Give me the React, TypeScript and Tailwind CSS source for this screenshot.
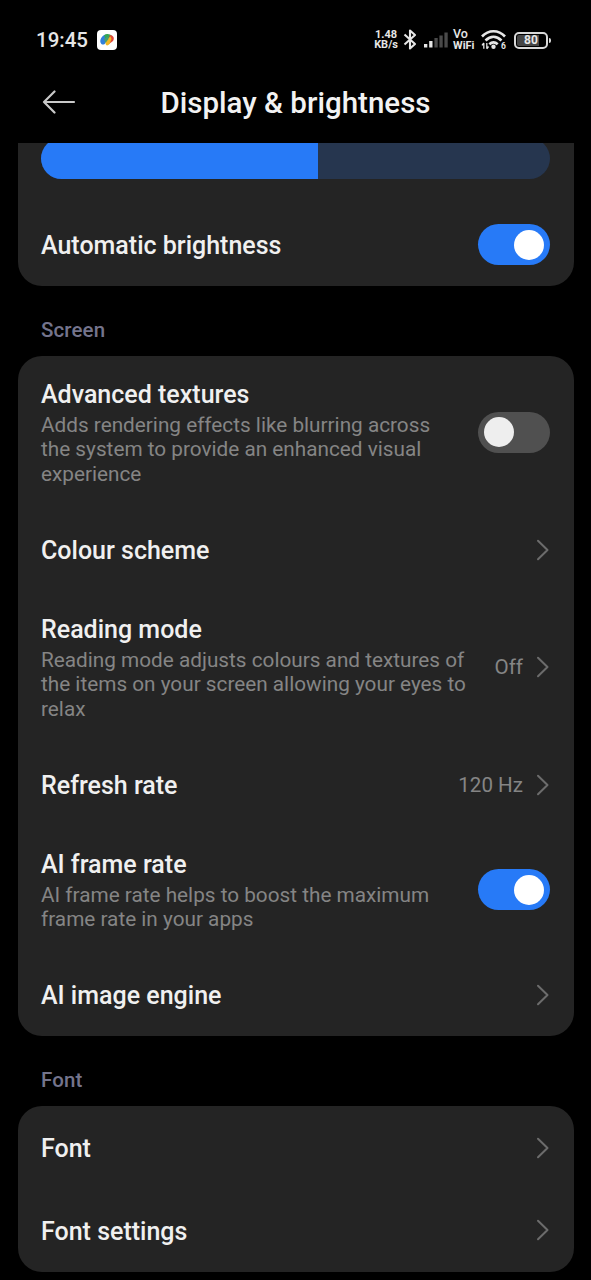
import type { ReactNode } from 'react'

function Toggle({ on }: { on?: boolean }) {
    return (
        <div className={`flex h-[41px] w-[72px] shrink-0 items-center rounded-full px-[6px] ${on ? 'justify-end bg-[#277af7]' : 'justify-start bg-[#505050]'}`}>
            <div className={`size-[30px] rounded-full ${on ? 'bg-white' : 'bg-[#eeeeee]'}`} />
        </div>
    )
}

function Chevron() {
    return (
        <svg width="14" height="22" viewBox="0 0 14 22" fill="none" className="shrink-0">
            <path d="M2 1.7 L11.5 11 L2 20.3" stroke="#6c6c6c" strokeWidth="2" strokeLinecap="round" strokeLinejoin="round" />
        </svg>
    )
}

type RowProps = {
    title: string
    lines?: string[]
    height: string
    value?: string
    children?: ReactNode
}

function Row({ title, lines, height, value, children }: RowProps) {
    return (
        <div className={`flex items-center justify-between ${height}`}>
            <div className={lines ? 'pt-[2px]' : 'pt-[3px]'}>
                <h2 className="text-[25px] leading-[30px] font-medium whitespace-nowrap text-[#f0f0f0]">{title}</h2>
                {lines && (
                    <p className="mt-[3px] text-[20.75px] leading-[24.5px] whitespace-nowrap text-[#858585]">
                        {lines.map((line) => (
                            <span key={line} className="block">{line}</span>
                        ))}
                    </p>
                )}
            </div>
            <div className="flex items-center gap-[13px]">
                {value && <span className="text-[20.6px] leading-[24px] text-[#858585]">{value}</span>}
                {children ?? <Chevron />}
            </div>
        </div>
    )
}

function StatusBar() {
    return (
        <div className="flex h-[80px] items-center justify-between pr-[40px] pl-[36px] text-[#e6e6e6]">
            <div className="flex items-center gap-[9px]">
                <span className="text-[20.5px] leading-[24px] font-medium">19:45</span>
                <svg width="20" height="20" viewBox="0 0 20 20">
                    <rect width="20" height="20" rx="4" fill="#fff" />
                    <path d="M3.3 12 C3 8 6 5 9 4.5 L8.5 13 C7 15.5 4 15 3.3 12Z" fill="#3080dc" />
                    <path d="M7 5.5 C10 3 13 4 15 6 L9.5 11Z" fill="#35a853" />
                    <path d="M12.5 5 C16.5 5 17.8 8.5 16 11 L12 14Z" fill="#e0483a" />
                    <path d="M9 10 L13.5 6.5 L14.5 9 L12.5 14 C11 16 8.5 16 8.5 13Z" fill="#f2b824" />
                    <path d="M7 9 L11.5 6 L11.5 9 L8.5 13Z" fill="#459f72" />
                </svg>
            </div>
            <div className="flex items-center">
                <div className="flex w-[24px] flex-col items-center text-[11px] leading-[10.5px] font-bold whitespace-nowrap">
                    <span>1.48</span>
                    <span>KB/s</span>
                </div>
                <svg width="14" height="22" viewBox="0 0 14 22" fill="none" stroke="#e6e6e6" strokeWidth="2.1" strokeLinejoin="round" className="ml-[5px]">
                    <path d="M1.5 5.5 L12 15 L7 19.5 V1.5 L12 6 L1.5 15.5" />
                </svg>
                <svg width="24" height="17" viewBox="0 0 24 17" className="ml-[7px]">
                    <rect x="0" y="12" width="3.3" height="3.5" fill="#e6e6e6" />
                    <rect x="5.2" y="9" width="3.3" height="6.5" fill="#e6e6e6" />
                    <rect x="10.4" y="6" width="3.3" height="9.5" fill="#4a4a4a" />
                    <rect x="15.4" y="3.5" width="3.3" height="12" fill="#4a4a4a" />
                    <rect x="20.4" y="0.5" width="3.3" height="15" fill="#4a4a4a" />
                </svg>
                <div className="ml-[5px] flex w-[23px] flex-col font-medium whitespace-nowrap">
                    <span className="text-[12.5px] leading-[11px]">Vo</span>
                    <span className="text-[11px] leading-[14px] font-bold">WiFi</span>
                </div>
                <svg width="26" height="22" viewBox="0 0 26 22" fill="none" className="ml-[5px]">
                    <g stroke="#e6e6e6" strokeWidth="2.6">
                        <path d="M1 7.5 C7.5 0.5 17.5 0.5 24 7.5" />
                        <path d="M4.5 11.5 C9.5 6.5 15.5 6.5 20.5 11.5" />
                        <path d="M8.3 15.3 C11 12.7 14 12.7 16.7 15.3" />
                    </g>
                    <circle cx="12.5" cy="17.8" r="2.2" fill="#e6e6e6" />
                    <path d="M2.8 19.8 V14 M1 16.3 L2.8 14 M5.8 14 V19.8 M7.5 17.5 L5.8 19.8" stroke="#e6e6e6" strokeWidth="1.3" />
                    <text x="20" y="20" fill="#e6e6e6" fontSize="8.5" fontWeight="700">6</text>
                </svg>
                <div className="ml-[7px] flex h-[17px] w-[34px] items-center justify-center rounded-[5px] border-2 border-[#d8d8d8] p-[1px]">
                    <div className="flex h-full w-full items-center justify-center rounded-[2px] bg-linear-to-r from-[#454545] from-80% to-black to-80% text-[12px] leading-none font-bold">80</div>
                </div>
                <div className="ml-[1px] h-[5px] w-[2px] rounded-r bg-[#d8d8d8]" />
            </div>
        </div>
    )
}

export default function App() {
    return (
        <div className="h-[1280px] w-[591px] overflow-hidden bg-black font-[Roboto,sans-serif]">
            <StatusBar />
            <header className="flex h-[63px] items-start pl-[42px]">
                <svg width="34" height="24" viewBox="0 0 34 24" fill="none" stroke="#c9c9c9" strokeWidth="2.2" strokeLinecap="round" strokeLinejoin="round" className="mt-[10px]">
                    <path d="M12.5 1.5 L2 12 L12.5 22.5 M2 12 H32" />
                </svg>
                <h1 className="ml-[84.5px] text-[29.5px] leading-[46px] font-medium tracking-[0.01px] whitespace-nowrap text-[#f2f2f2]">Display &amp; brightness</h1>
            </header>

            <main className="pl-[17.5px]">
                <section className="h-[143px] w-[556px] overflow-hidden rounded-b-[24px] bg-[#242424] px-[23.5px]">
                    <div className="-mt-[5px] flex h-[41px] w-[509px] overflow-hidden rounded-full bg-[#26364f]">
                        <div className="w-[277px] bg-[#277af7]" />
                    </div>
                    <div className="mt-[24px]">
                        <Row title="Automatic brightness" height="h-[83px]"><Toggle on /></Row>
                    </div>
                </section>

                <h3 className="flex h-[70px] items-center pt-[19px] pl-[23.5px] text-[20.5px] font-medium tracking-[0.1px] text-[#74748c]">Screen</h3>
                <section className="w-[556px] rounded-[24px] bg-[#242424] px-[23.5px]">
                    <Row
                        title="Advanced textures"
                        height="h-[152px]"
                        lines={['Adds rendering effects like blurring across', 'the system to provide an enhanced visual', 'experience']}
                    >
                        <Toggle />
                    </Row>
                    <Row title="Colour scheme" height="h-[83px]" />
                    <Row
                        title="Reading mode"
                        height="h-[152px]"
                        value="Off"
                        lines={['Reading mode adjusts colours and textures of', 'the items on your screen allowing your eyes to', 'relax']}
                    />
                    <Row title="Refresh rate" height="h-[83px]" value="120 Hz" />
                    <Row
                        title="AI frame rate"
                        height="h-[127.5px]"
                        lines={['AI frame rate helps to boost the maximum', 'frame rate in your apps']}
                    >
                        <Toggle on />
                    </Row>
                    <Row title="AI image engine" height="h-[82.5px]" />
                </section>

                <h3 className="flex h-[70px] items-center pt-[19px] pl-[23.5px] text-[20.5px] font-medium tracking-[0.1px] text-[#74748c]">Font</h3>
                <section className="w-[556px] rounded-[24px] bg-[#242424] px-[23.5px]">
                    <Row title="Font" height="h-[83px]" />
                    <Row title="Font settings" height="h-[82.5px]" />
                </section>
            </main>
        </div>
    )
}
